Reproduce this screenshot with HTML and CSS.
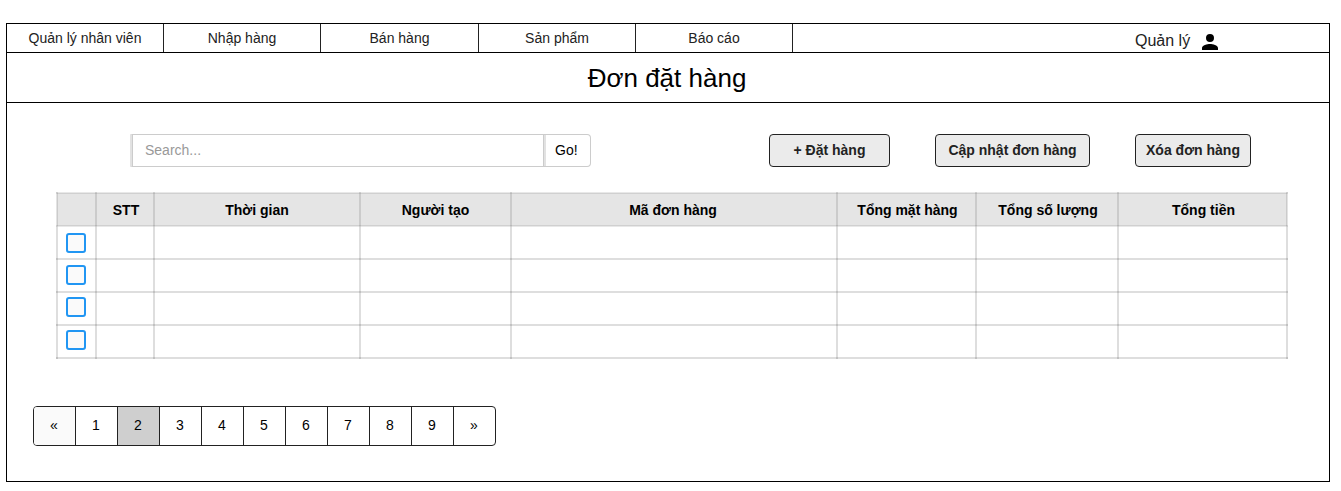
FILE: index.html
```html
<!DOCTYPE html>
<html lang="vi">
<head>
<meta charset="utf-8">
<title>Đơn đặt hàng</title>
<link rel="stylesheet" href="styles.css">
</head>
<body>
<main class="frame">
  <header class="topbar">
    <nav class="nav">
      <a class="nav-item"><span>Quản lý nhân viên</span></a>
      <a class="nav-item"><span>Nhập hàng</span></a>
      <a class="nav-item nav-item-wide"><span>Bán hàng</span></a>
      <a class="nav-item"><span>Sản phẩm</span></a>
      <a class="nav-item"><span>Báo cáo</span></a>
    </nav>
    <div class="user">
      <span class="user-name">Quản lý</span>
      <svg class="user-icon" viewBox="4 4 16 16"><path d="M12 12a4 4 0 1 0 0-8 4 4 0 0 0 0 8zm0 2c-2.67 0-8 1.34-8 4v2h16v-2c0-2.66-5.33-4-8-4z"/></svg>
    </div>
  </header>
  <h1 class="title"><span>Đơn đặt hàng</span></h1>
  <section class="toolbar">
    <div class="search">
      <div class="search-field">Search...</div>
      <div class="search-go">Go!</div>
    </div>
    <div class="actions">
      <button class="btn btn-add">+ Đặt hàng</button>
      <button class="btn btn-update">Cập nhật đơn hàng</button>
      <button class="btn btn-delete">Xóa đơn hàng</button>
    </div>
  </section>
  <table class="orders">
    <colgroup>
      <col class="c-check"><col class="c-stt"><col class="c-time"><col class="c-user"><col class="c-code"><col class="c-items"><col class="c-qty"><col class="c-total">
    </colgroup>
    <thead>
      <tr><th></th><th class="nudge">STT</th><th>Thời gian</th><th>Người tạo</th><th class="nudge-back">Mã đơn hàng</th><th class="nudge">Tổng mặt hàng</th><th class="nudge">Tổng số lượng</th><th class="nudge">Tổng tiền</th></tr>
    </thead>
    <tbody>
      <tr><td class="pad-6"><div class="check"></div></td><td></td><td></td><td></td><td></td><td></td><td></td><td></td></tr>
      <tr><td class="pad-5"><div class="check"></div></td><td></td><td></td><td></td><td></td><td></td><td></td><td></td></tr>
      <tr><td class="pad-4"><div class="check"></div></td><td></td><td></td><td></td><td></td><td></td><td></td><td></td></tr>
      <tr><td class="pad-4"><div class="check"></div></td><td></td><td></td><td></td><td></td><td></td><td></td><td></td></tr>
    </tbody>
  </table>
  <nav class="pager">
    <a class="page page-prev">«</a><a class="page">1</a><a class="page page-current">2</a><a class="page">3</a><a class="page">4</a><a class="page">5</a><a class="page">6</a><a class="page">7</a><a class="page">8</a><a class="page">9</a><a class="page">»</a>
  </nav>
</main>
</body>
</html>
```
FILE: styles.css
```css
* { box-sizing: border-box; }
body {
  margin: 0;
  padding: 23px 0 0 6px;
  background: #fff;
  color: #000;
  font-family: "Liberation Sans", Arial, sans-serif;
  font-size: 14px;
}
.frame {
  width: 1324px;
  height: 459px;
  border: 1px solid #000;
}
.topbar {
  display: flex;
  height: 29px;
  border-bottom: 1px solid #000;
}
.nav { display: flex; }
.nav-item {
  width: 157px;
  height: 28px;
  border-right: 1px solid #222;
  color: #222;
  line-height: 28px;
  text-align: center;
}
.nav-item-wide { width: 158px; }
.user {
  display: flex;
  margin-left: 342px;
  color: #222;
  font-size: 16px;
}
.user-name {
  width: 67px;
  line-height: 34px;
}
.user-icon {
  width: 16px;
  height: 16px;
  margin-top: 10px;
}
.title {
  height: 50px;
  margin: 0;
  padding-right: 2px;
  border-bottom: 1px solid #000;
  font-size: 26px;
  font-weight: 400;
  line-height: 51px;
  text-align: center;
}
.toolbar {
  display: flex;
  margin: 31px 0 0 123px;
}
.search {
  display: flex;
  width: 461px;
  height: 33px;
  border: 1px solid #ccc;
  border-left: 2px solid #e2e2e2;
  border-radius: 0 4px 4px 0;
  line-height: 31px;
}
.search-field {
  width: 412px;
  padding-left: 12px;
  border: 1px solid #ccc;
  border-width: 0 1px;
  color: #999;
}
.search-go {
  flex: 1;
  padding-left: 9px;
  border-left: 2px solid #e2e2e2;
}
.actions {
  display: flex;
  margin-left: 178px;
}
.btn {
  height: 33px;
  padding: 0 0 2px;
  border: 1px solid #222;
  border-radius: 4px;
  background: #ebebeb;
  color: #222;
  font: bold 14px "Liberation Sans", Arial, sans-serif;
}
.btn-add { width: 121px; margin-right: 45px; }
.btn-update { width: 155px; margin-right: 45px; }
.btn-delete { width: 116px; }
.orders {
  width: 1232px;
  margin: 25px 0 0 49px;
  border-collapse: collapse;
  table-layout: fixed;
}
.orders th, .orders td {
  height: 33px;
  padding: 0;
  border: 2px solid rgba(0, 0, 0, 0.13);
}
.orders th {
  border-color: rgba(0, 0, 0, 0.09) rgba(0, 0, 0, 0.11);
  background: #e5e5e5;
}
.orders .nudge { padding-left: 2px; }
.orders .nudge-back { padding-right: 2px; }
.orders td { vertical-align: top; }
.c-check { width: 39px; }
.c-stt { width: 58px; }
.c-time { width: 206px; }
.c-user { width: 151px; }
.c-code { width: 326px; }
.c-items { width: 139px; }
.c-qty { width: 142px; }
.c-total { width: 169px; }
.check {
  width: 20px;
  height: 20px;
  margin-left: 8px;
  border: 2px solid #2196f3;
  border-radius: 3px;
  background: #fafafa;
}
.orders .pad-6 { padding-top: 6px; }
.orders .pad-5 { padding-top: 5px; }
.orders .pad-4 { padding-top: 4px; }
.pager {
  display: flex;
  width: 463px;
  height: 40px;
  margin: 47px 0 0 26px;
  border: 1px solid #222;
  border-radius: 4px;
  overflow: hidden;
  line-height: 36px;
}
.page {
  width: 42px;
  padding-right: 1px;
  border-right: 1px solid #222;
  text-align: center;
}
.page:last-child { width: 41px; border-right: 0; }
.page-prev { background: #fafafa; }
.page-current { background: #cfcfcf; }
```
